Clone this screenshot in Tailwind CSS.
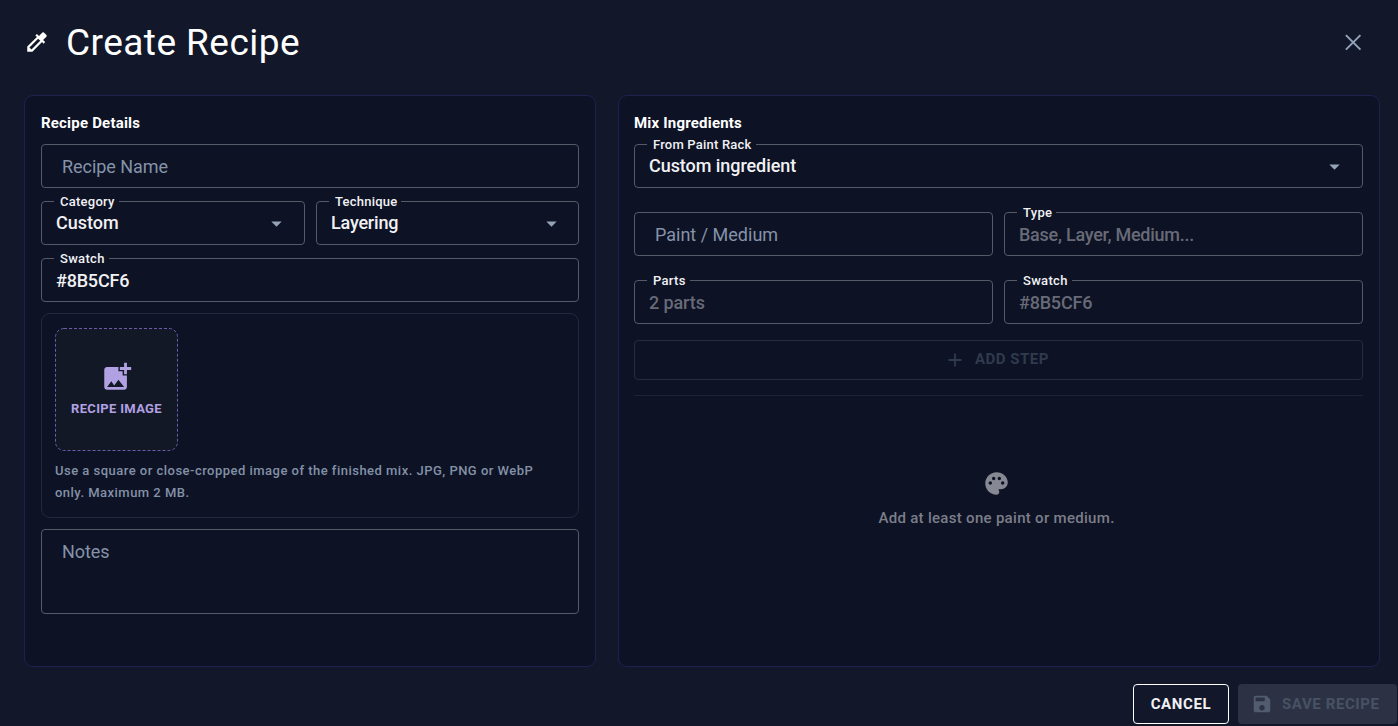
<!DOCTYPE html>
<html lang="en">
<head>
<meta charset="utf-8">
<title>Create Recipe</title>
<script src="https://cdn.jsdelivr.net/npm/@tailwindcss/browser@4"></script>
</head>
<body class="h-[726px] w-[1398px] overflow-hidden bg-[#12182a] font-['Roboto','Liberation_Sans',sans-serif] text-[#f1f1f4]">
<div class="flex h-full flex-col">
  <header class="flex h-[95px] shrink-0 items-start pt-[18px] pl-6 pr-8">
    <svg class="mt-[11px] h-[26px] w-[26px]" viewBox="0 0 24 24" fill="#fff"><path d="m20.71 5.63-2.34-2.34a.996.996 0 0 0-1.41 0l-3.12 3.12-1.93-1.91-1.41 1.41 1.42 1.42L3 16.25V21h4.75l8.92-8.92 1.42 1.42 1.41-1.41-1.92-1.92 3.12-3.12c.4-.4.4-1.03.01-1.42M6.92 19 5 17.08l8.06-8.06 1.92 1.92z"/></svg>
    <h1 class="mt-px ml-4 text-[37px] leading-[48px] tracking-[0.45px] text-white">Create Recipe</h1>
    <svg class="ml-auto mt-[11px] h-[26px] w-[26px]" viewBox="0 0 26 26" fill="none" stroke="#94a3b8" stroke-width="2"><path d="M5.900 6.100l14.500 14.500M20.400 6.100l-14.500 14.500"/></svg>
  </header>

  <main class="flex h-[572px] shrink-0 gap-[22px] pl-6 pr-[18px]">
    <section class="flex w-[572px] flex-col rounded-[9px] border border-[#231f51] bg-[#0d1225] px-4 pt-4">
      <h2 class="h-8 text-[15px] leading-[22px] font-bold tracking-[0.2px] text-white">Recipe Details</h2>
      <div class="flex h-11 items-center rounded-[4px] border border-[#565966] pl-5 pt-px text-[18px] tracking-[-0.05px] text-[#8593a9]">Recipe Name</div>
      <div class="mt-[13px] grid grid-cols-[264px_263px] gap-[11px]">
        <div class="relative flex h-11 items-center rounded-[4px] border border-[#565966] pl-[14px] pr-[15px] text-[18px] font-medium">
          <span class="absolute -top-2 left-[12px] bg-[#0d1225] pl-[6px] pr-1 text-[13px] leading-[15px] font-medium tracking-[0.26px]">Category</span>
          <span class="-mt-0.5">Custom</span>
          <svg class="ml-auto h-[25px] w-[25px]" viewBox="0 0 24 24" fill="#94a3b8"><path d="m7 10 5 5 5-5z"/></svg>
        </div>
        <div class="relative flex h-11 items-center rounded-[4px] border border-[#565966] pl-[14px] pr-[14px] text-[18px] font-medium">
          <span class="absolute -top-2 left-[12px] bg-[#0d1225] pl-[6px] pr-1 text-[13px] leading-[15px] font-medium tracking-[0.22px]">Technique</span>
          <span class="-mt-0.5 tracking-[-0.2px]">Layering</span>
          <svg class="ml-auto h-[25px] w-[25px]" viewBox="0 0 24 24" fill="#94a3b8"><path d="m7 10 5 5 5-5z"/></svg>
        </div>
      </div>
      <div class="relative mt-[13px] flex h-11 items-center rounded-[4px] border border-[#565966] pl-[14px] pt-px text-[18px] font-medium">
        <span class="absolute -top-2 left-[12px] bg-[#0d1225] pl-[6px] pr-1 text-[13px] leading-[15px] font-medium tracking-[0.3px]">Swatch</span>
        <span class="tracking-[-0.2px]">#8B5CF6</span>
      </div>
      <div class="mt-[11px] h-[205px] rounded-[9px] border border-[#202a3c] px-[13px] pt-[14px]">
        <div class="relative flex h-[123px] w-[123px] flex-col items-center pt-[32px]">
          <svg class="absolute inset-0 h-[123px] w-[123px]" viewBox="0 0 123 123"><rect x=".5" y=".5" width="122" height="122" rx="8.500" fill="#121826" stroke="#6c5aaa" stroke-dasharray="3 2"/></svg>
          <svg class="relative h-[34px] w-[34px]" viewBox="0 0 24 24" fill="#b1a0e2"><path d="M19 7v2.990s-1.990.01-2 0V7h-3s.01-1.990 0-2h3V2h2v3h3v2zm-3 4V8h-3V5H5c-1.100 0-2 .9-2 2v12c0 1.100.9 2 2 2h12c1.100 0 2-.9 2-2v-8zM5 19l3-4 2 3 3-4 4 5z"/></svg>
          <span class="relative mt-[5px] text-[13px] leading-[20px] font-bold tracking-[0.33px] whitespace-nowrap text-[#b1a0e2]">RECIPE IMAGE</span>
        </div>
        <p class="mt-[9px] text-[13px] leading-[22px] font-medium tracking-[0.48px] text-[#8391a7]">Use a square or close-cropped image of the finished mix. JPG, PNG or WebP<br>only. Maximum 2 MB.</p>
      </div>
      <div class="mt-[11px] h-[85px] rounded-[4px] border border-[#565966] pt-[9px] pl-5 text-[18px] leading-[26px] tracking-[-0.1px] text-[#8593a9]">Notes</div>
    </section>

    <section class="flex w-[762px] flex-col rounded-[9px] border border-[#231f51] bg-[#0d1225] px-4 pl-[15px] pt-4">
      <h2 class="h-8 text-[15px] leading-[22px] font-bold tracking-[0.2px] text-white">Mix Ingredients</h2>
      <div class="relative flex h-11 items-center rounded-[4px] border border-[#565966] pl-[14px] pr-[15px] text-[18px] font-medium">
        <span class="absolute -top-2 left-[12px] bg-[#0d1225] pl-[6px] pr-[5px] text-[13px] leading-[15px] font-medium tracking-[0.2px]">From Paint Rack</span>
        <span class="-mt-0.5 tracking-[-0.06px]">Custom ingredient</span>
        <svg class="ml-auto h-[25px] w-[25px]" viewBox="0 0 24 24" fill="#94a3b8"><path d="m7 10 5 5 5-5z"/></svg>
      </div>
      <div class="mt-6 grid grid-cols-2 gap-x-[11px] gap-y-6">
        <div class="flex h-11 items-center rounded-[4px] border border-[#565966] pl-5 pt-px text-[18px] text-[#8593a9]">Paint / Medium</div>
        <div class="relative flex h-11 items-center rounded-[4px] border border-[#565966] pl-[14px] pt-px text-[18px] font-medium text-[#686b77]">
          <span class="absolute -top-2 left-[12px] bg-[#0d1225] pl-[6px] pr-1 text-[13px] leading-[15px] font-medium tracking-[0.3px] text-[#f1f1f4]">Type</span>
          <span class="tracking-[-0.25px]">Base, Layer, Medium...</span>
        </div>
        <div class="relative flex h-11 items-center rounded-[4px] border border-[#565966] pl-[14px] pt-px text-[18px] font-medium text-[#686b77]">
          <span class="absolute -top-2 left-[12px] bg-[#0d1225] pl-[6px] pr-1 text-[13px] leading-[15px] font-medium tracking-[0.3px] text-[#f1f1f4]">Parts</span>
          <span class="tracking-[-0.1px]">2 parts</span>
        </div>
        <div class="relative flex h-11 items-center rounded-[4px] border border-[#565966] pl-[14px] pt-px text-[18px] font-medium text-[#686b77]">
          <span class="absolute -top-2 left-[12px] bg-[#0d1225] pl-[6px] pr-1 text-[13px] leading-[15px] font-medium tracking-[0.3px] text-[#f1f1f4]">Swatch</span>
          <span class="tracking-[-0.2px]">#8B5CF6</span>
        </div>
      </div>
      <button class="mt-4 flex h-10 items-center justify-center rounded-[4px] border border-[#262c3e] pr-1 text-[15px] font-bold tracking-[0.5px] text-[#303a4d]">
        <svg class="mr-[9px] h-[22px] w-[22px]" viewBox="0 0 24 24" fill="#303a4d"><path d="M19 13h-6v6h-2v-6H5v-2h6V5h2v6h6z"/></svg>
        <span class="-mt-0.5">ADD STEP</span>
      </button>
      <hr class="mt-[15px] border-[#1c2335]">
      <div class="flex flex-col items-center pt-[74px] pr-1">
        <svg class="h-[27px] w-[27px]" viewBox="0 0 24 24" fill="#868893"><path d="M12 2C6.490 2 2 6.490 2 12s4.490 10 10 10c1.380 0 2.500-1.120 2.500-2.500 0-.61-.23-1.200-.64-1.670-.08-.1-.13-.21-.13-.33 0-.28.22-.5.5-.5H16c3.310 0 6-2.690 6-6 0-4.960-4.490-9-10-9m5.500 11c-.83 0-1.500-.67-1.500-1.500s.67-1.500 1.500-1.500 1.500.67 1.500 1.500-.67 1.500-1.500 1.500m-3-4c-.83 0-1.500-.67-1.500-1.500S13.670 6 14.500 6s1.500.67 1.500 1.500S15.330 9 14.500 9M5 11.500c0-.83.67-1.500 1.500-1.500s1.500.67 1.500 1.500S7.330 13 6.500 13 5 12.330 5 11.500m6-4c0 .83-.67 1.500-1.500 1.500S8 8.330 8 7.500 8.670 6 9.500 6s1.500.67 1.500 1.500"/></svg>
        <p class="mt-[10px] text-[15px] leading-[22px] font-medium tracking-[0.3px] text-[#7c7e89]">Add at least one paint or medium.</p>
      </div>
    </section>
  </main>

  <footer class="flex justify-end gap-[9px] pt-[17px] pr-px">
    <button class="flex h-10 w-24 items-center justify-center rounded-[4px] border border-white text-[15px] font-bold tracking-[0.65px]">CANCEL</button>
    <button class="flex h-10 w-[159px] items-center rounded-[4px] bg-[#2c3244] pl-[13px] text-[15px] font-bold tracking-[0.6px] whitespace-nowrap text-[#475263]">
      <svg class="mr-[9px] h-[22px] w-[22px]" viewBox="0 0 24 24" fill="#515c6e"><path d="M17 3H5c-1.110 0-2 .9-2 2v14c0 1.100.89 2 2 2h14c1.100 0 2-.9 2-2V7zm-5 16c-1.660 0-3-1.340-3-3s1.340-3 3-3 3 1.340 3 3-1.340 3-3 3m3-10H5V5h10z"/></svg>
      <span>SAVE RECIPE</span>
    </button>
  </footer>
</div>
</body>
</html>
